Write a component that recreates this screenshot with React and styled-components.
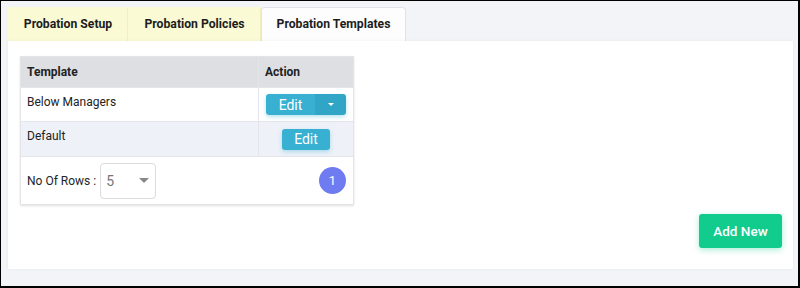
import React from 'react'
import styled, { createGlobalStyle } from 'styled-components'

const GlobalStyle = createGlobalStyle`
  html, body {
    margin: 0;
    padding: 0;
    background: #ffffff;
  }
  * {
    box-sizing: border-box;
  }
`

const Frame = styled.div`
  width: 800px;
  height: 288px;
  border-style: solid;
  border-color: #000;
  border-width: 1px 2px 2px 1px;
  background: #f3f4f8;
  padding: 6px 5px 0 7px;
  font-family: Roboto, 'Liberation Sans', sans-serif;
  color: #212529;
  display: flex;
  flex-direction: column;
`

const TabBar = styled.div`
  display: flex;
  height: 34px;
`

const Tab = styled.div`
  width: ${p => p.w}px;
  display: flex;
  align-items: center;
  justify-content: center;
  padding-bottom: 1px;
  font-size: 12.2px;
  font-weight: 700;
  color: #1d1d1d;
  background: ${p => (p.active ? '#fdfdfd' : '#fafad4')};
  border: 1px solid ${p => (p.active ? '#e2e3e8' : 'transparent')};
  border-bottom: none;
  border-right: 1px solid ${p => (p.active ? '#e2e3e8' : '#efefc0')};
  border-radius: ${p => (p.active ? '4px 4px 0 0' : '0')};
`

const Panel = styled.div`
  height: 228px;
  background: #fff;
  box-shadow: 0 0 3px rgba(0, 0, 0, 0.06);
  padding: 15px 11px 0 12px;
  display: flex;
  flex-direction: column;
`

const Table = styled.div`
  width: 334px;
  border: 1px solid #e3e4e8;
  box-shadow: 0 1px 2px rgba(0, 0, 0, 0.12);
  font-size: 12px;
`

const Row = styled.div`
  display: grid;
  grid-template-columns: 238px 1fr;
  height: ${p => p.h}px;
  background: ${p => p.bg || '#fff'};
  border-bottom: 1px solid #e3e5ea;
`

const Cell = styled.div`
  padding: ${p => (p.center ? '0 6px' : '7px 6px')};
  border-right: ${p => (p.divider ? '1px solid #e3e5ea' : 'none')};
  font-weight: ${p => (p.head ? 700 : 400)};
  display: flex;
  align-items: ${p => (p.center ? 'center' : 'flex-start')};
  justify-content: ${p => (p.middle ? 'center' : 'flex-start')};
  color: #222;
`

const SplitButton = styled.div`
  display: flex;
  height: 21px;
  border-radius: 3px;
  overflow: hidden;
  box-shadow: 0 2px 4px rgba(53, 175, 208, 0.35);
`

const EditButton = styled.button`
  border: none;
  margin: 0;
  height: 21px;
  width: ${p => p.w}px;
  background: #37b0d2;
  color: #fff;
  font-family: Roboto, 'Liberation Sans', sans-serif;
  font-size: 14px;
  padding: 0;
  border-radius: ${p => (p.solo ? '3px' : '0')};
  box-shadow: ${p => (p.solo ? '0 2px 4px rgba(53, 175, 208, 0.35)' : 'none')};
  display: flex;
  align-items: center;
  justify-content: center;
`

const CaretButton = styled(EditButton)`
  background: #30a5c6;
`

const Caret = styled.span`
  width: 0;
  height: 0;
  border-left: 3px solid transparent;
  border-right: 3px solid transparent;
  border-top: 3px solid #fff;
`

const Footer = styled.div`
  height: 47px;
  display: flex;
  align-items: center;
  justify-content: space-between;
  padding: 0 7px 0 6px;
`

const RowsLabel = styled.div`
  display: flex;
  align-items: center;
  gap: 4px;
`

const Select = styled.div`
  width: 56px;
  height: 36px;
  border: 1px solid #dcdcdc;
  border-radius: 4px;
  display: flex;
  align-items: center;
  justify-content: space-between;
  padding: 0 6px 0 5px;
  color: #777;
  font-size: 14px;
`

const SelectCaret = styled.span`
  width: 0;
  height: 0;
  border-left: 5px solid transparent;
  border-right: 5px solid transparent;
  border-top: 5px solid #888;
`

const PageDot = styled.div`
  width: 27px;
  height: 27px;
  border-radius: 50%;
  background: #6f7bf0;
  color: #fff;
  font-size: 13px;
  display: flex;
  align-items: center;
  justify-content: center;
`

const AddButton = styled.button`
  align-self: flex-end;
  margin-top: 9px;
  width: 83px;
  height: 34px;
  border: none;
  border-radius: 3px;
  background: #12cc8e;
  color: #fff;
  font-family: Roboto, 'Liberation Sans', sans-serif;
  font-size: 13.5px;
  font-weight: 500;
  box-shadow: 0 2px 6px rgba(18, 204, 142, 0.35);
`

export default function App() {
  return (
    <>
      <GlobalStyle />
      <Frame>
        <TabBar>
          <Tab w={120}>Probation Setup</Tab>
          <Tab w={133}>Probation Policies</Tab>
          <Tab w={145} active>Probation Templates</Tab>
        </TabBar>
        <Panel>
          <Table>
            <Row h={31} bg="#dedfe3">
              <Cell head divider center>Template</Cell>
              <Cell head center>Action</Cell>
            </Row>
            <Row h={34}>
              <Cell divider>Below Managers</Cell>
              <Cell middle center>
                <SplitButton>
                  <EditButton w={49}>Edit</EditButton>
                  <CaretButton w={31}><Caret /></CaretButton>
                </SplitButton>
              </Cell>
            </Row>
            <Row h={35} bg="#eef1f8">
              <Cell divider>Default</Cell>
              <Cell middle center>
                <EditButton w={48} solo>Edit</EditButton>
              </Cell>
            </Row>
            <Footer>
              <RowsLabel>
                No Of Rows :
                <Select>
                  5
                  <SelectCaret />
                </Select>
              </RowsLabel>
              <PageDot>1</PageDot>
            </Footer>
          </Table>
          <AddButton>Add New</AddButton>
        </Panel>
      </Frame>
    </>
  )
}
